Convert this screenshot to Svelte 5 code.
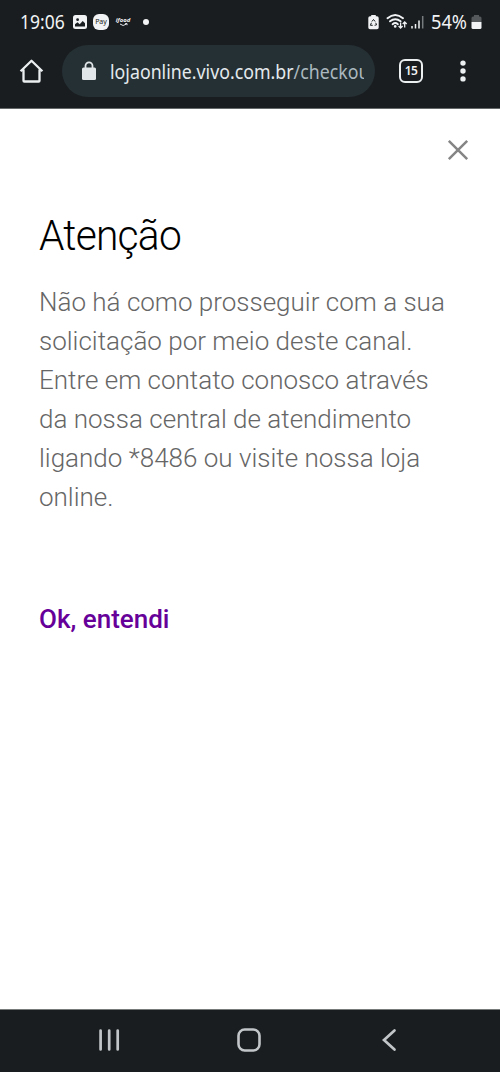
<script lang="ts">
	let open = true;

	const tabs = 15;
	const battery = 54;
	const message = [
		'Não há como prosseguir com a sua',
		'solicitação por meio deste canal.',
		'Entre em contato conosco através',
		'da nossa central de atendimento',
		'ligando *8486 ou visite nossa loja',
		'online.'
	];

	function close() {
		open = false;
	}
</script>

<div class="phone">
	<header>
		<div class="status-bar">
			<span class="time">19:06</span>
			<svg class="picture" width="14" height="14" viewBox="0 0 14 14">
				<rect width="14" height="14" rx="2.5" fill="#f1f3f4" />
				<circle cx="4.6" cy="4.7" r="1.4" fill="#191d20" />
				<path d="M2 11.5V9.2l2.5-2 2.2 2 3-3.3L12 8.2v3.3z" fill="#191d20" />
			</svg>
			<span class="pay">Pay</span>
			<span class="ifood">
				<b>ifood</b>
				<svg width="9" height="4" viewBox="0 0 9 4">
					<path d="M1 1q3 3 6.5 0M6 .8l2-.3v1.7" fill="none" stroke="#e8eaed" stroke-width="1" />
				</svg>
			</span>
			<span class="dot"></span>

			<div class="indicators">
				<svg width="11" height="16" viewBox="0 0 11 16">
					<path d="M3.2 1h4.6v1.3H9A1.7 1.7 0 0 1 10.7 4v9.5A1.7 1.7 0 0 1 9 15.2H2A1.7 1.7 0 0 1 .3 13.5V4A1.7 1.7 0 0 1 2 2.3h1.2z" fill="#f1f3f4" />
					<path d="M3.9 7.5 5.5 5.5l1.6 2M7.7 8.8l.9 2-2 .5M4.7 11.3H2.4l1-2.5" fill="none" stroke="#191d20" stroke-width="1" />
				</svg>
				<svg class="wifi" width="22" height="17" viewBox="0 0 22 17">
					<g fill="none" stroke="#f1f3f4" stroke-width="1.9" stroke-linecap="round">
						<path d="M1.5 5.2q7.7-6.5 15.5 0" />
						<path d="M4 8.3q5.3-4.3 10.6 0" />
						<path d="M6.6 11.2q2.7-2.2 5.3 0" />
					</g>
					<circle cx="9.2" cy="13.4" r="1.3" fill="#f1f3f4" />
					<path d="M14.6 9.5v5.3M12.6 13l2 2 2-2M18.7 14.5V9.2M16.7 11l2-2 2 2" fill="none" stroke="#f1f3f4" stroke-width="1.3" />
				</svg>
				<svg class="signal" width="13" height="14" viewBox="0 0 13 14">
					<path d="M1 11v2.5M4.5 9v4.5M8 5.500v8" stroke="#f1f3f4" stroke-width="1.5" />
					<path d="M11.7 1v12.5" stroke="#777b7d" stroke-width="1.5" />
				</svg>
				<span class="percent">{battery}%</span>
				<svg class="battery" width="11" height="16" viewBox="0 0 11 16">
					<path d="M3 1h5v1.5h1A1.5 1.5 0 0 1 10.5 4v4H.5V4A1.5 1.5 0 0 1 2 2.5h1z" fill="#55595b" />
					<path d="M.5 8h10v5.5A1.5 1.5 0 0 1 9 15H2a1.5 1.5 0 0 1-1.5-1.5z" fill="#f1f3f4" />
				</svg>
			</div>
		</div>

		<div class="toolbar">
			<svg class="home" width="26" height="26" viewBox="0 0 26 26">
				<path d="M1.6 13.3 12.5 2.7 23.4 13.3M4.5 11.5v11.2q0 .8.8.8h14.4q.8 0 .8-.8V11.5" fill="none" stroke="#eceff0" stroke-width="2.3" stroke-linejoin="round" />
			</svg>
			<div class="address">
				<svg width="14" height="20" viewBox="0 0 14 20">
					<path d="M3.5 8V4.8a3.5 3.5 0 0 1 7 0V8" fill="none" stroke="#e1e6e9" stroke-width="1.8" />
					<rect y="6.5" width="14" height="12.5" rx="1.5" fill="#e1e6e9" />
				</svg>
				<div class="url"><span>lojaonline.vivo.com.br<i>/checkout</i></span></div>
			</div>
			<div class="tabs">{tabs}</div>
			<svg class="menu" width="6" height="22" viewBox="0 0 6 22">
				<g fill="#eceff0">
					<circle cx="3" cy="3.1" r="2.7" />
					<circle cx="3" cy="11" r="2.7" />
					<circle cx="3" cy="18.9" r="2.7" />
				</g>
			</svg>
		</div>
	</header>

	<main>
		{#if open}
			<button class="close" aria-label="Fechar" on:click={close}>
				<svg width="22" height="22" viewBox="0 0 22 22">
					<path d="m1.8 1.8 18.4 18.4M20.2 1.8 1.8 20.2" stroke="#858585" stroke-width="2.5" />
				</svg>
			</button>
			<h1>Atenção</h1>
			<p>
				{#each message as line}
					<span>{line}</span>
				{/each}
			</p>
			<button class="confirm" on:click={close}>Ok, entendi</button>
		{/if}
	</main>

	<nav>
		<svg width="24" height="24" viewBox="0 0 24 24">
			<path d="M3.6 2.5v19M12.2 2.5v19M20.7 2.5v19" stroke="#c3c6c8" stroke-width="2.7" stroke-linecap="round" />
		</svg>
		<svg width="24" height="24" viewBox="0 0 24 24">
			<rect x="1.5" y="1.5" width="21" height="21" rx="6.2" fill="none" stroke="#c3c6c8" stroke-width="2.6" />
		</svg>
		<svg width="24" height="24" viewBox="0 0 24 24">
			<path d="M17.5 2.5 7 12 17.5 21.5" fill="none" stroke="#c3c6c8" stroke-width="2.7" stroke-linecap="round" />
		</svg>
	</nav>
</div>

<style>
	:global(body) {
		margin: 0;
		background: #fff;
	}

	.phone {
		display: flex;
		flex-direction: column;
		width: 500px;
		height: 1072px;
		overflow: hidden;
		background: #fff;
		font-family: Roboto, sans-serif;
	}

	header {
		box-sizing: border-box;
		height: 109px;
		background: #191d20;
		border-bottom: 1px solid #65696a;
		color: #f1f3f4;
		font-family: 'Noto Sans', sans-serif;
	}

	.status-bar {
		display: flex;
		align-items: center;
		height: 43px;
		padding: 0 18px 0 20px;
	}

	.time {
		width: 53px;
		font-size: 19px;
		line-height: 24px;
		transform: scaleX(0.92);
		transform-origin: left;
	}

	.pay {
		width: 16px;
		height: 16px;
		margin-left: 6px;
		border-radius: 6px;
		background: #f1f3f4;
		color: #191d20;
		font-size: 7px;
		line-height: 15px;
		text-align: center;
	}

	.ifood {
		display: flex;
		flex-direction: column;
		align-items: center;
		width: 16px;
		margin-left: 6px;
	}

	.ifood b {
		font-size: 6px;
		font-style: italic;
		line-height: 6px;
	}

	.dot {
		width: 6px;
		height: 6px;
		margin-left: 12px;
		border-radius: 50%;
		background: #f1f3f4;
	}

	.indicators {
		display: flex;
		align-items: center;
		margin-left: auto;
	}

	.wifi {
		margin-left: 7px;
	}

	.signal {
		margin-left: 3px;
	}

	.percent {
		width: 37px;
		margin: 0 3px 0 7px;
		font-size: 19px;
		line-height: 24px;
		transform: scaleX(0.96);
		transform-origin: left;
	}

	.toolbar {
		display: flex;
		align-items: center;
		height: 56px;
		padding: 0 34px 0 19px;
	}

	.address {
		display: flex;
		align-items: center;
		box-sizing: border-box;
		width: 313px;
		height: 52px;
		margin-left: 17px;
		padding: 0 11px 0 20px;
		border-radius: 26px;
		background: #253034;
	}

	.address svg {
		flex: none;
	}

	.url {
		flex: 1;
		margin-left: 14px;
		padding-top: 2px;
		overflow: hidden;
		color: #e3e9ec;
		font-size: 19px;
		white-space: nowrap;
	}

	.url span {
		display: inline-block;
		transform: scaleX(0.935);
		transform-origin: left;
	}

	.url i {
		color: #abb8bf;
		font-style: normal;
	}

	.tabs {
		box-sizing: border-box;
		width: 24px;
		height: 24px;
		margin-left: 24px;
		border: 2.5px solid #eceff0;
		border-radius: 6px;
		font-size: 12px;
		font-weight: 600;
		line-height: 20px;
		letter-spacing: -0.5px;
		text-align: center;
	}

	.menu {
		margin-left: auto;
	}

	main {
		display: flex;
		flex: 1;
		flex-direction: column;
		align-items: flex-start;
		padding: 0 31px 0 39px;
	}

	button {
		padding: 0;
		border: 0;
		background: none;
		font-family: inherit;
		cursor: pointer;
	}

	.close {
		align-self: flex-end;
		height: 22px;
		margin-top: 30px;
	}

	.close svg {
		display: block;
	}

	h1 {
		margin: 50px 0 0;
		color: #000;
		font-size: 42px;
		font-weight: 300;
		line-height: 50px;
		letter-spacing: -0.8px;
		transform: scaleX(0.97);
		transform-origin: left;
	}

	p {
		margin: 22px 0 0;
		color: #666;
		font-size: 26px;
		font-weight: 300;
		line-height: 39.1px;
		white-space: nowrap;
	}

	p span {
		display: block;
	}

	.confirm {
		margin-top: 81px;
		color: #660099;
		font-size: 26px;
		font-weight: 500;
		line-height: 40px;
	}

	nav {
		display: flex;
		align-items: center;
		justify-content: space-between;
		box-sizing: border-box;
		height: 63px;
		padding: 0 99px 2px 97px;
		border-top: 1px solid #777b79;
		background: #191d20;
	}
</style>
